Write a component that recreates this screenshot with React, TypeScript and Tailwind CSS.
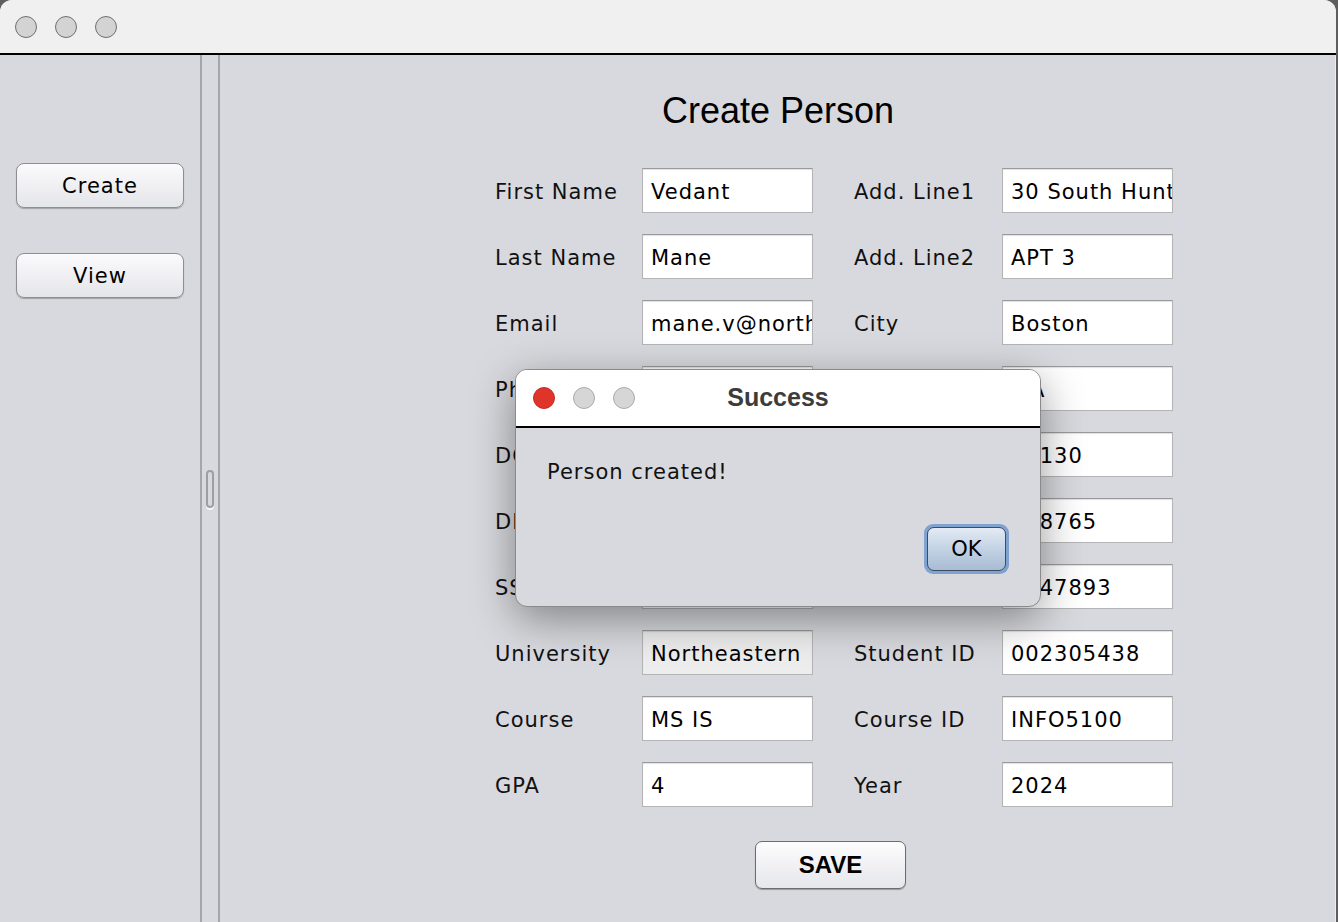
import React from 'react';

interface Field {
  label: string;
  value: string;
  tint?: boolean;
}

const leftFields: Field[] = [
  { label: 'First Name', value: 'Vedant' },
  { label: 'Last Name', value: 'Mane' },
  { label: 'Email', value: 'mane.v@northeastern.edu' },
  { label: 'Phone', value: '8573219876' },
  { label: 'DOB', value: '01/01/1999' },
  { label: 'DL No.', value: 'S1234567' },
  { label: 'SSN', value: '123456789' },
  { label: 'University', value: 'Northeastern', tint: true },
  { label: 'Course', value: 'MS IS' },
  { label: 'GPA', value: '4' },
];

const rightFields: Field[] = [
  { label: 'Add. Line1', value: '30 South Huntington Ave' },
  { label: 'Add. Line2', value: 'APT 3' },
  { label: 'City', value: 'Boston' },
  { label: 'State', value: 'MA' },
  { label: 'Zip Code', value: '02130' },
  { label: 'Bank Acc', value: '988765' },
  { label: 'Card No.', value: '2247893' },
  { label: 'Student ID', value: '002305438' },
  { label: 'Course ID', value: 'INFO5100' },
  { label: 'Year', value: '2024' },
];

const lucida = { fontFamily: '"DejaVu Sans", "Noto Sans", sans-serif' };
const helv = { fontFamily: '"Liberation Sans", Arial, sans-serif' };

function TextBox({ value, tint }: { value: string; tint?: boolean }) {
  return (
    <div
      className={`h-[45px] w-[171px] overflow-hidden whitespace-nowrap border border-[#b4b4b6] border-t-[#9a9a9c] pl-[8px] text-[21px] leading-[47px] tracking-[1px] text-black shadow-[inset_0_1px_1px_rgba(0,0,0,0.12)] ${
        tint ? 'bg-[#ededed]' : 'bg-white'
      }`}
      style={lucida}
    >
      {value}
    </div>
  );
}

function FormColumn({ fields, labelWidth }: { fields: Field[]; labelWidth: string }) {
  return (
    <div className="flex flex-col gap-[21px]">
      {fields.map((f) => (
        <div key={f.label} className="flex h-[45px] items-center">
          <div className={`${labelWidth} pt-[4px] text-[21px] tracking-[1px] text-[#111]`} style={lucida}>
            {f.label}
          </div>
          <TextBox value={f.value} tint={f.tint} />
        </div>
      ))}
    </div>
  );
}

function SideButton({ label }: { label: string }) {
  return (
    <button
      className="h-[45px] w-[168px] rounded-[8px] border border-[#8e8e92] bg-gradient-to-b from-[#fbfbfc] via-[#f0f0f3] to-[#e4e5e9] pt-[3px] text-[21px] tracking-[1px] text-black shadow-[0_1px_1px_rgba(0,0,0,0.25)]"
      style={lucida}
    >
      {label}
    </button>
  );
}

function Light({ color, ring }: { color: string; ring: string }) {
  return <span className={`block h-[22px] w-[22px] rounded-full border-[1.5px] ${color} ${ring}`} />;
}

export default function App() {
  return (
    <div className="h-[922px] w-[1338px] overflow-hidden bg-[#5e5e5e]">
      <div className="relative flex h-full w-[1336px] flex-col overflow-hidden rounded-tl-[12px] rounded-tr-[12px] bg-[#d8d9de]">
        {/* title bar */}
        <div className="flex h-[53px] shrink-0 items-center gap-[18px] bg-[#f0f0f0] pl-[15px]">
          <Light color="bg-[#d3d3d3]" ring="border-[#6f6f6f]" />
          <Light color="bg-[#d3d3d3]" ring="border-[#6f6f6f]" />
          <Light color="bg-[#d3d3d3]" ring="border-[#6f6f6f]" />
        </div>
        <div className="h-[2px] shrink-0 bg-black" />

        <div className="flex flex-1">
          {/* left nav */}
          <div className="flex w-[200px] shrink-0 flex-col items-start gap-[45px] pl-[16px] pt-[108px]">
            <SideButton label="Create" />
            <SideButton label="View" />
          </div>

          {/* split divider */}
          <div className="flex w-[20px] shrink-0 items-center justify-center border-l-2 border-r-2 border-l-[#a4a6ad] border-r-[#a4a6ad]">
            <div className="h-[38px] w-[8px] rounded-full border-2 border-[#9c9ea5] bg-[#d8d9de] shadow-[0_2px_0_#f8f8f8]" />
          </div>

          {/* content */}
          <div className="flex flex-1 flex-col">
            <div className="pt-[35px] text-center text-[36px] leading-[42px] text-black" style={helv}>
              Create Person
            </div>
            <div className="flex gap-[41px] pl-[275px] pt-[36px]">
              <FormColumn fields={leftFields} labelWidth="w-[147px]" />
              <FormColumn fields={rightFields} labelWidth="w-[148px]" />
            </div>
            <div className="pl-[535px] pt-[34px]">
              <button
                className="h-[48px] w-[151px] rounded-[7px] border border-[#6c6c70] bg-gradient-to-b from-[#fdfdfd] via-[#f1f1f4] to-[#e6e7eb] text-[24px] font-bold text-black shadow-[0_1px_1px_rgba(0,0,0,0.3)]"
                style={helv}
              >
                SAVE
              </button>
            </div>
          </div>
        </div>
        <div className="absolute right-0 top-[55px] h-[867px] w-[1px] bg-[#ececec]" />

        {/* dialog */}
        <div className="absolute left-[515px] top-[369px] flex h-[238px] w-[526px] flex-col overflow-hidden rounded-[12px] border border-[#8a8a8a] bg-[#d8d9de] shadow-[0_12px_44px_rgba(0,0,0,0.4)]">
          <div className="relative flex h-[56px] shrink-0 items-center gap-[18px] bg-white pl-[17px]">
            <Light color="bg-[#e0342a]" ring="border-[#c32b22]" />
            <Light color="bg-[#d6d6d6]" ring="border-[#ababab]" />
            <Light color="bg-[#d6d6d6]" ring="border-[#ababab]" />
            <div
              className="absolute left-0 right-0 top-[13px] text-center text-[25px] font-bold leading-[28px] text-[#3c3c3c]"
              style={helv}
            >
              Success
            </div>
          </div>
          <div className="h-[2px] shrink-0 bg-black" />
          <div className="flex flex-1 flex-col px-[31px]">
            <div className="pt-[30px] text-[21px] leading-[28px] tracking-[1px] text-[#111]" style={lucida}>
              Person created!
            </div>
            <div className="flex flex-1 items-start justify-end pt-[38px]">
              <div className="rounded-[9px] bg-[#7fa2d1] p-[3px]">
                <button
                  className="h-[44px] w-[79px] rounded-[7px] border border-[#3f4c5e] bg-gradient-to-b from-[#e3ebf5] via-[#c3d2e4] to-[#a8bcd4] pt-[2px] text-[21px] text-black"
                  style={lucida}
                >
                  OK
                </button>
              </div>
            </div>
          </div>
        </div>
      </div>
    </div>
  );
}
